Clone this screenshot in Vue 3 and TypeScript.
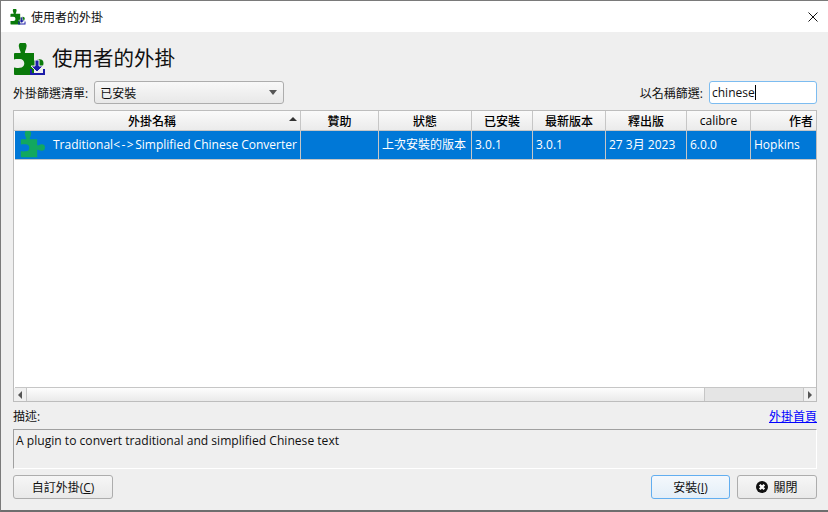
<script setup lang="ts">
const headers = ['外掛名稱', '贊助', '狀態', '已安裝', '最新版本', '釋出版', 'calibre', '作者']
const cells = ['', '上次安裝的版本', '3.0.1', '3.0.1', '27 3月 2023', '6.0.0', 'Hopkins']
const puzzle = 'M1 11 Q1 10 2 10 H7.500 C8 8 6.200 7 6 4 A3.900 3.900 0 1 1 13.400 4 C13.200 7 11.500 8 12 10 H21 V17.500 C23 18 23.500 16.500 26.500 16.200 A4 4 0 1 1 26.500 24.200 C23.500 24 23 22.500 21 23 V32 H2 Q1 32 1 31 V24.500 C3 25 4 25 7 24.700 A4.300 4.300 0 0 0 7 16.100 C4 16 3 16 1 16.500 Z'
</script>

<template>
  <div class="window">
    <div class="titlebar">
      <svg class="title-icon" viewBox="0 0 33 33">
        <path :d="puzzle" fill="#0a7a0a" />
        <path d="M22 17 h4 v6 h4 l-6 6 -6 -6 h4 z" fill="#1c1ca8" stroke="#efefef" stroke-width="1" />
        <path d="M17 26 v6 h15 v-6 h-2 v4 h-11 v-4 z" fill="#1c1ca8" />
      </svg>
      <span class="title-text">使用者的外掛</span>
      <svg class="close-x" viewBox="0 0 10 10"><path d="M0.500 0.500 L9.500 9.500 M9.500 0.500 L0.500 9.500" stroke="#111" stroke-width="1" fill="none" /></svg>
    </div>
    <div class="body">
      <div class="heading">
        <svg class="head-icon" viewBox="0 0 33 33">
          <path :d="puzzle" fill="#0a7a0a" />
          <path d="M22 17 h4 v6 h4 l-6 6 -6 -6 h4 z" fill="#1c1ca8" stroke="#efefef" stroke-width="1" />
          <path d="M17 26 v6 h15 v-6 h-2 v4 h-11 v-4 z" fill="#1c1ca8" />
        </svg>
        <span class="head-text">使用者的外掛</span>
      </div>
      <div class="filters">
        <span class="lbl">外掛篩選清單:</span>
        <div class="combo"><span>已安裝</span><i class="combo-arrow"></i></div>
        <span class="spacer"></span>
        <span class="lbl">以名稱篩選:</span>
        <div class="search"><span>chinese</span><i class="caret"></i></div>
      </div>
      <div class="table">
        <div class="thead">
          <div v-for="(h, i) in headers" :key="h" class="th" :class="{ last: i === 7, sorted: i === 0 }">
            <span>{{ h }}</span>
            <i v-if="i === 0" class="sort"></i>
          </div>
        </div>
        <div class="row">
          <div class="td name">
            <svg class="row-icon" viewBox="0 0 33 33"><path :d="puzzle" fill="#12a85f" /></svg>
            <span>Traditional<span class="arrow">&lt;-&gt;</span>Simplified Chinese Converter</span>
          </div>
          <div v-for="(c, i) in cells" :key="i" class="td">{{ c }}</div>
        </div>
        <div class="table-fill"></div>
        <div class="hscroll">
          <div class="sb-btn"><i class="arr-left"></i></div>
          <div class="sb-thumb"></div>
          <div class="sb-trough"></div>
          <div class="sb-btn right"><i class="arr-right"></i></div>
        </div>
      </div>
      <div class="desc-head">
        <span class="lbl">描述:</span>
        <a class="link">外掛首頁</a>
      </div>
      <div class="desc">A plugin to convert traditional and simplified Chinese text</div>
      <div class="actions">
        <button class="btn custom">自訂外掛(<u>C</u>)</button>
        <span class="spacer"></span>
        <button class="btn install">安裝(<u>I</u>)</button>
        <button class="btn close">
          <svg class="close-icon" viewBox="0 0 12 12">
            <circle cx="6" cy="6" r="6" fill="#111" />
            <path d="M3.700 3.700 L8.300 8.300 M8.300 3.700 L3.700 8.300" stroke="#fff" stroke-width="2.300" />
          </svg>
          <span>關閉</span>
        </button>
      </div>
    </div>
  </div>
</template>

<style>
html, body { margin: 0; background: #efefef; }
</style>

<style scoped>
.window {
  width: 828px;
  height: 512px;
  box-sizing: border-box;
  border-top: 1px solid #7a7a7a;
  border-left: 1px solid #7a7a7a;
  border-bottom: 2px solid #6e6e6e;
  display: flex;
  flex-direction: column;
  overflow: hidden;
  font-family: "Open Sans", "Noto Sans CJK TC", sans-serif;
  font-size: 12px;
  color: #111;
  background: #efefef;
}
.titlebar {
  height: 31px;
  flex: none;
  background: #fff;
  display: flex;
  align-items: center;
  padding: 0 10px 0 9px;
}
.title-icon { width: 16px; height: 16px; margin-right: 5px; }
.title-text { font-size: 12px; flex: 1; }
.close-x { width: 10px; height: 10px; }
.body {
  flex: 1;
  display: flex;
  flex-direction: column;
  padding: 11px 11px 0 12px;
  min-height: 0;
}
.heading { height: 33px; display: flex; align-items: center; gap: 6px; flex: none; }
.head-icon { width: 33px; height: 33px; }
.head-text { font-size: 20.500px; line-height: 31px; padding-bottom: 2px; }
.filters { display: flex; align-items: center; height: 23px; margin-top: 5px; flex: none; }
.lbl { font-size: 12px; white-space: nowrap; }
.spacer { flex: 1; }
.combo {
  width: 190px;
  height: 23px;
  box-sizing: border-box;
  margin-left: 6px;
  border: 1px solid #adadad;
  border-radius: 3px;
  background: linear-gradient(#f8f8f8, #e8e8e8);
  display: flex;
  align-items: center;
  justify-content: space-between;
  padding: 0 6px 0 5px;
}
.combo-arrow { width: 0; height: 0; border-left: 4px solid transparent; border-right: 4px solid transparent; border-top: 5px solid #555; }
.search {
  width: 108px;
  height: 23px;
  box-sizing: border-box;
  margin-left: 6px;
  border: 1px solid #7cbcf0;
  border-radius: 3px;
  background: #fff;
  display: flex;
  align-items: center;
  padding-left: 2px;
}
.caret { width: 1px; height: 15px; background: #000; }
.table {
  margin-top: 6px;
  height: 292px;
  flex: none;
  box-sizing: border-box;
  border: 1px solid #bdbdbd;
  display: flex;
  flex-direction: column;
  background: #fff;
}
.thead { display: flex; height: 19px; flex: none; border-bottom: 1px solid #c6c6c6; background: linear-gradient(#fafafa, #ebebeb); }
.th {
  position: relative;
  box-sizing: border-box;
  border-right: 1px solid #c6c6c6;
  display: flex;
  align-items: center;
  justify-content: center;
  white-space: nowrap;
  font-size: 12px;
  font-weight: 500;
  color: #000;
}
.th.sorted { padding-right: 10px; }
.th.last { justify-content: flex-end; padding-right: 3px; border-right: 0; }
.th:nth-child(1), .td:nth-child(1) { width: 287px; }
.th:nth-child(2), .td:nth-child(2) { width: 78px; }
.th:nth-child(3), .td:nth-child(3) { width: 93px; }
.th:nth-child(4), .td:nth-child(4) { width: 61px; }
.th:nth-child(5), .td:nth-child(5) { width: 73px; }
.th:nth-child(6), .td:nth-child(6) { width: 81px; }
.th:nth-child(7), .td:nth-child(7) { width: 64px; }
.th:nth-child(8), .td:nth-child(8) { flex: 1; }
.sort { position: absolute; right: 3px; top: 6px; width: 0; height: 0; border-left: 4px solid transparent; border-right: 4px solid transparent; border-bottom: 4px solid #333; }
.row { display: flex; height: 29px; flex: none; background: #0078d7; color: #fff; border-bottom: 1px solid #c6c6c6; box-sizing: border-box; margin-left: 1px; line-height: 15px; }
.td {
  box-sizing: border-box;
  border-right: 1px solid #c6c6c6;
  display: flex;
  align-items: center;
  padding: 0 0 1px 3px;
  white-space: nowrap;
  overflow: hidden;
  font-size: 12px;
}
.td:last-child { border-right: 0; }
.td.name { width: 286px; padding-left: 5px; }
.row-icon { width: 27px; height: 27px; margin-right: 6px; flex: none; }
.arrow { letter-spacing: 1.500px; }
.table-fill { flex: 1; border-bottom: 1px solid #c6c6c6; margin-left: 1px; }
.hscroll { display: flex; height: 13px; flex: none; background: #e5e5e5; }
.sb-btn { width: 13px; flex: none; box-sizing: border-box; border-right: 1px solid #c6c6c6; background: #f0f0f0; display: flex; align-items: center; justify-content: center; }
.sb-btn.right { border-right: 0; border-left: 1px solid #c6c6c6; }
.sb-thumb { width: 678px; flex: none; box-sizing: border-box; background: linear-gradient(#fdfdfd, #eaeaea); border-right: 1px solid #c6c6c6; }
.sb-trough { flex: 1; }
.arr-left { width: 0; height: 0; border-top: 4px solid transparent; border-bottom: 4px solid transparent; border-right: 4px solid #555; }
.arr-right { width: 0; height: 0; border-top: 4px solid transparent; border-bottom: 4px solid transparent; border-left: 4px solid #555; }
.desc-head { display: flex; justify-content: space-between; align-items: center; height: 18px; margin-top: 5px; flex: none; }
.link { color: #0000ff; text-decoration: underline; font-size: 12px; }
.desc {
  height: 40px;
  flex: none;
  box-sizing: border-box;
  margin-top: 4px;
  border-top: 1px solid #a0a0a0;
  border-left: 1px solid #a0a0a0;
  border-right: 1px solid #fff;
  border-bottom: 1px solid #fff;
  padding: 2px 2px;
  font-size: 12.100px;
}
.actions { display: flex; margin-top: 6px; height: 25px; flex: none; }
.btn {
  box-sizing: border-box;
  height: 24px;
  border: 1px solid #adadad;
  border-radius: 3px;
  background: linear-gradient(#f6f6f6, #e9e9e9);
  font-family: inherit;
  font-size: 12px;
  color: #111;
  display: flex;
  align-items: center;
  justify-content: center;
  padding: 0;
}
.custom { width: 100px; }
.install { width: 79px; border-color: #62aef0; background: linear-gradient(#f4f8fc, #e3eef8); }
.close { width: 80px; margin-left: 7px; gap: 5px; }
.close-icon { width: 12px; height: 12px; }
</style>
